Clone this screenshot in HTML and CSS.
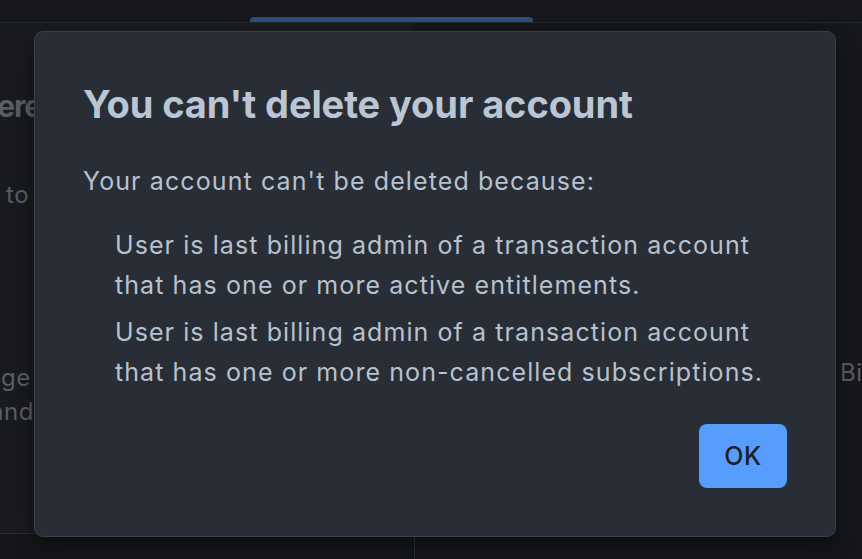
FILE: index.html
```html
<!DOCTYPE html>
<html lang="en">
<head>
<meta charset="utf-8">
<title>You can't delete your account</title>
<link rel="stylesheet" href="styles.css">
</head>
<body>
<div class="page">
  <header class="topbar">
    <div class="tab"></div>
  </header>
  <div class="main">
    <section class="left">
      <h2 class="bg-heading">There</h2>
      <p class="bg-text to">to</p>
      <p class="bg-text page-line">ge</p>
      <p class="bg-text and-line">and</p>
    </section>
    <section class="right">
      <p class="bg-text bi">Billing</p>
    </section>
  </div>
  <div class="bottom">
    <div class="bottom-left"></div>
    <div class="bottom-right"></div>
  </div>
</div>

<div class="modal" role="dialog" aria-labelledby="modal-title">
  <h1 id="modal-title" class="modal-title">You can't delete your account</h1>
  <p class="modal-text">Your account can't be deleted because:</p>
  <ul class="reasons">
    <li>User is last billing admin of a transaction account<br>that has one or more active entitlements.</li>
    <li>User is last billing admin of a transaction account<br>that has one or more non-cancelled subscriptions.</li>
  </ul>
  <div class="modal-footer">
    <button class="ok-btn" type="button">OK</button>
  </div>
</div>
</body>
</html>
```

FILE: styles.css
```css
* { box-sizing: border-box; }

html, body {
  margin: 0;
  padding: 0;
  height: 100%;
  overflow: hidden;
}

body {
  background: #16181b;
  font-family: Inter, "Noto Sans", "Liberation Sans", sans-serif;
  color: #b6c2cf;
}

.page {
  display: flex;
  flex-direction: column;
  height: 100vh;
}

.topbar {
  height: 23px;
  flex: none;
  background: #17181b;
  border-bottom: 1px solid #222a2c;
  display: flex;
  align-items: flex-end;
  padding-left: 250px;
}

.tab {
  width: 283px;
  height: 5px;
  background: #2d4f7c;
  border-radius: 4px 4px 0 0;
}

.main {
  display: flex;
  height: 511px;
  flex: none;
}

.left {
  width: 414px;
  background: #191b1e;
  border-bottom: 1px solid #2b2f34;
  overflow: hidden;
  padding-top: 63px;
}

.right {
  flex: 1;
  background: #16181b;
  padding-top: 334px;
  overflow: hidden;
}

.bg-heading {
  margin: 0 0 0 -39px;
  font-size: 30px;
  line-height: 40px;
  font-weight: 700;
  letter-spacing: -1.2px;
  color: #5a5f67;
  white-space: nowrap;
}

.bg-text {
  margin: 0;
  font-size: 24px;
  line-height: 32px;
  letter-spacing: 0.6px;
  color: #5a5f67;
  white-space: nowrap;
}

.to { margin: 53px 0 0 6px; }
.page-line { margin: 151px 0 0 1px; }
.and-line { margin: 2px 0 0 -10px; }

.bi { margin-left: 426px; }

.bottom {
  flex: 1;
  display: flex;
  background: #141619;
}

.bottom-left {
  width: 415px;
  border-right: 1px solid #2b2f34;
}

.bottom-right { flex: 1; }

.modal {
  position: absolute;
  left: 34px;
  top: 31px;
  width: 802px;
  height: 506px;
  background: #292d35;
  border: 1px solid #3b4048;
  border-radius: 9px;
  box-shadow: 0 8px 24px rgba(0, 0, 0, 0.45);
  padding: 52px 48px 48px 48px;
  display: flex;
  flex-direction: column;
}

.modal-title {
  margin: 0;
  font-size: 38px;
  line-height: 40px;
  font-weight: 700;
  letter-spacing: -0.1px;
  color: #bac6d3;
}

.modal-text {
  margin: 37px 0 0;
  font-size: 25px;
  line-height: 40px;
  letter-spacing: 1.1px;
  color: #b6c2cf;
}

.reasons {
  list-style: none;
  margin: 24px 0 0;
  padding: 0 0 0 32px;
  font-size: 25px;
  line-height: 40px;
  letter-spacing: 1.08px;
  color: #b6c2cf;
}

.reasons li + li { margin-top: 7px; }

.modal-footer {
  margin-top: 32px;
  display: flex;
  justify-content: flex-end;
}

.ok-btn {
  width: 88px;
  height: 64px;
  border: none;
  border-radius: 8px;
  background: #579dff;
  color: #1d2125;
  font-family: Inter, "Noto Sans", "Liberation Sans", sans-serif;
  font-size: 25px;
  font-weight: 500;
  letter-spacing: 0.5px;
  padding: 0;
}
```
